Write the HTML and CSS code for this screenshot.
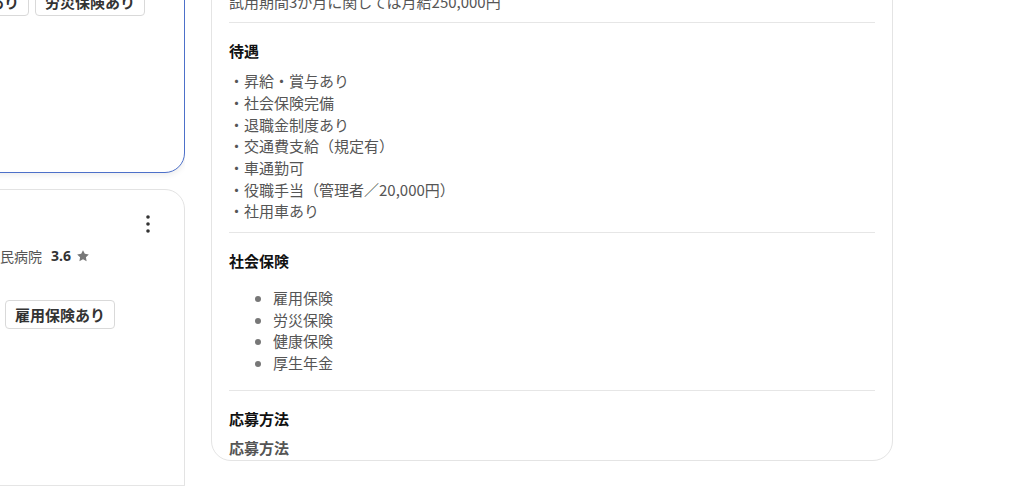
FILE: index.html
```html
<!DOCTYPE html>
<html lang="ja">

<head>
    <meta http-equiv="content-type" content="text/html; charset=utf-8" />
    <title>求人詳細</title>
    <link rel="stylesheet" href="styles.css">
</head>
<body>
<div class="page">
    <aside class="list">
        <div class="cards">
            <article class="job-card selected">
                <div class="card-head">
                    <h3 class="job-title">介護職員</h3>
                    <button class="kebab" aria-label="メニュー">
                        <svg width="4" height="18" viewBox="0 0 4 18"><circle cx="2" cy="2" r="1.8"/><circle cx="2" cy="9" r="1.8"/><circle cx="2" cy="16" r="1.8"/></svg>
                    </button>
                </div>
                <p class="company"><span class="company-name">医療法人青葉会　新緑ヶ丘中央病院</span><b class="rating">3.8</b><svg class="star" width="14" height="14" viewBox="0 0 24 24"><path d="M12 2l3.09 6.26L22 9.27l-5 4.87 1.18 6.88L12 17.77l-6.18 3.25L7 14.14 2 9.27l6.91-1.01L12 2z"/></svg></p>
                <p class="location">大阪府大阪市</p>
                <ul class="tags">
                    <li>車通勤可</li>
                    <li>退職金制度あり</li>
                    <li>労災保険あり</li>
                </ul>
                <p class="posted">3日前</p>
            </article>

            <article class="job-card">
                <div class="card-head">
                    <h3 class="job-title">看護助手</h3>
                    <button class="kebab" aria-label="メニュー">
                        <svg width="4" height="18" viewBox="0 0 4 18"><circle cx="2" cy="2" r="1.8"/><circle cx="2" cy="9" r="1.8"/><circle cx="2" cy="16" r="1.8"/></svg>
                    </button>
                </div>
                <p class="company"><span class="company-name">医療法人青葉会　新緑ヶ丘市民病院</span><b class="rating">3.6</b><svg class="star" width="14" height="14" viewBox="0 0 24 24"><path d="M12 2l3.09 6.26L22 9.27l-5 4.87 1.18 6.88L12 17.77l-6.18 3.25L7 14.14 2 9.27l6.91-1.01L12 2z"/></svg></p>
                <p class="location">兵庫県神戸市</p>
                <ul class="tags">
                    <li>正社員</li>
                    <li>社会保険完備</li>
                    <li>雇用保険あり</li>
                    <li>賞与あり</li>
                </ul>
                <p class="posted">5日前</p>
            </article>
        </div>
    </aside>

    <main class="detail">
        <section class="detail-section">
            <h4>給与</h4>
            <p class="text">月給280,000円〜350,000円<br>試用期間3か月に関しては月給250,000円</p>
        </section>

        <section class="detail-section">
            <h4>待遇</h4>
            <ul class="plain-list">
                <li>・昇給・賞与あり</li>
                <li>・社会保険完備</li>
                <li>・退職金制度あり</li>
                <li>・交通費支給（規定有）</li>
                <li>・車通勤可</li>
                <li>・役職手当（管理者／20,000円）</li>
                <li>・社用車あり</li>
            </ul>
        </section>

        <section class="detail-section">
            <h4>社会保険</h4>
            <ul class="bullets">
                <li>雇用保険</li>
                <li>労災保険</li>
                <li>健康保険</li>
                <li>厚生年金</li>
            </ul>
        </section>

        <section class="detail-section last">
            <h4>応募方法</h4>
            <p class="sub">応募方法</p>
        </section>
    </main>
</div>
</body>
</html>
```

FILE: styles.css
```css
body {
  margin: 0;
  background: #fff;
  color: #555;
  font-family: "Noto Sans CJK JP", "Noto Sans", sans-serif;
  font-size: 15px;
}
p, ul, h3, h4 {
  margin: 0;
}
.page {
  display: flex;
  align-items: flex-start;
  gap: 26px;
  margin-left: -203px;
}

/* job list (scrolled) */
.list {
  width: 388px;
  height: 486px;
  box-sizing: border-box;
  overflow: hidden;
  border-bottom: 1px solid #e5e5e5;
  flex-shrink: 0;
}
.cards {
  display: flex;
  flex-direction: column;
  gap: 16px;
  margin-top: -124px;
}
.job-card {
  border: 1px solid #e3e3e3;
  border-radius: 20px;
  padding: 19px 20px 24px;
  background: #fff;
}
.job-card.selected {
  border-color: #4d70c9;
  box-shadow: 0 2px 6px rgba(0, 0, 0, 0.08);
}
.card-head {
  display: flex;
  justify-content: space-between;
  align-items: center;
  height: 30px;
}
.job-title {
  font-size: 17px;
  color: #222;
}
.kebab {
  width: 30px;
  height: 30px;
  margin-right: 1px;
  padding: 0;
  border: none;
  background: transparent;
  display: flex;
  align-items: center;
  justify-content: center;
  fill: #333;
}
.company {
  margin-top: 6px;
  font-size: 14px;
  line-height: 22px;
  color: #555;
  display: flex;
  align-items: center;
  white-space: nowrap;
}
.rating {
  margin-left: 9px;
  color: #333;
  font-family: "Open Sans", sans-serif;
  font-weight: 700;
  font-size: 14px;
}
.star {
  margin-left: 5px;
  fill: #777;
}
.location {
  font-size: 14px;
  line-height: 22px;
}
.tags {
  list-style: none;
  padding: 0;
  margin-top: 11px;
  display: flex;
  flex-wrap: wrap;
  gap: 5px 6px;
}
.tags li {
  border: 1px solid #d9d9d9;
  border-radius: 4px;
  padding: 3px 9px;
  line-height: 21px;
  font-weight: 700;
  color: #333;
}
.posted {
  margin-top: 110px;
  font-size: 13px;
  line-height: 22px;
  color: #888;
}

/* detail panel */
.detail {
  width: 682px;
  height: 540px;
  margin-top: -79px;
  box-sizing: border-box;
  flex-shrink: 0;
  border: 1px solid #e4e4e4;
  border-radius: 20px;
  padding: 0 17px;
  overflow: hidden;
}
.detail-section {
  padding: 17px 0 10px;
  border-bottom: 1px solid #e6e6e6;
}
.detail-section.last {
  border-bottom: none;
}
.detail h4 {
  font-size: 15px;
  line-height: 22px;
  color: #111;
  margin-bottom: 8px;
}
.text, .plain-list, .bullets {
  line-height: 1.445;
  color: #555;
}
.plain-list {
  list-style: none;
  padding: 0;
}
.bullets {
  margin: 15px 0 6px;
  padding-left: 44px;
}
.bullets li::marker {
  color: #777;
}
.sub {
  font-weight: 700;
  line-height: 22px;
  margin-top: -1px;
}
```
